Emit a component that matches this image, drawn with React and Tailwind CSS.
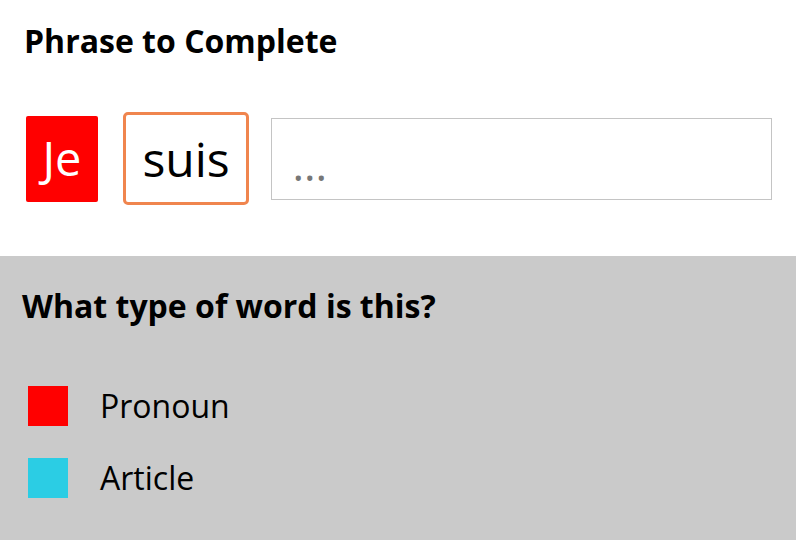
import React from 'react';

const types = [
  { label: 'Pronoun', color: 'bg-[#ff0000]' },
  { label: 'Article', color: 'bg-[#2bcde4]' },
];

export default function App() {
  return (
    <div className="w-[796px] h-[540px] bg-white flex flex-col font-['Open_Sans',sans-serif] text-black">
      <div className="h-[256px] px-6 pt-[21px]">
        <h2 className="text-[32px] font-bold leading-[40px]">Phrase to Complete</h2>
        <div className="mt-[51px] flex items-center">
          <div className="ml-[2px] w-[72px] h-[86px] bg-[#ff0000] rounded-[2px] flex items-center justify-center text-white text-[47px]">
            Je
          </div>
          <div className="ml-[25px] w-[127px] h-[93px] border-[3px] border-[#f0854e] rounded-[5px] flex items-center justify-center text-[48px]">
            suis
          </div>
          <div className="ml-[22px] w-[502px] h-[82px] border border-[#c4c4c4] flex items-center px-5 pt-[10px] text-[#777] text-[44px] leading-none">
            ...
          </div>
        </div>
      </div>
      <div className="flex-1 bg-[#cacaca] px-[22px] pt-[28px]">
        <h2 className="text-[32px] font-bold leading-[44px]">What type of word is this?</h2>
        <div className="mt-[58px] flex flex-col gap-[32px] pl-[6px]">
          {types.map((t) => (
            <div key={t.label} className="flex items-center">
              <div className={`w-10 h-10 ${t.color}`} />
              <span className="ml-8 text-[32px] leading-[40px]">{t.label}</span>
            </div>
          ))}
        </div>
      </div>
    </div>
  );
}
